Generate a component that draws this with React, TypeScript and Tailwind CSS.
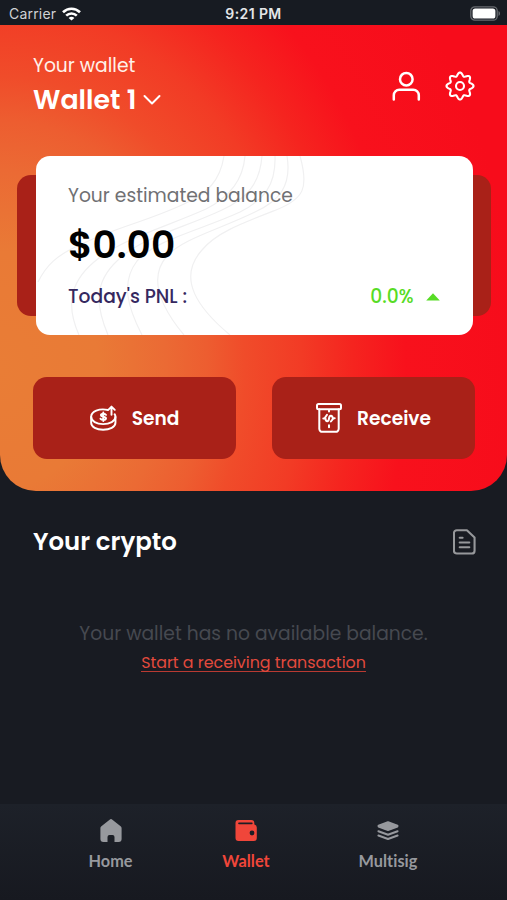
import React from "react";

const sans = "font-['Poppins','Inter',sans-serif]";

function gearPath() {
  const pts: string[] = [];
  for (let i = 0; i < 160; i++) {
    const a = (i / 160) * Math.PI * 2;
    const r = 11.8 + 1.7 * Math.cos(8 * a);
    pts.push(`${(15 + r * Math.cos(a)).toFixed(2)} ${(15 + r * Math.sin(a)).toFixed(2)}`);
  }
  return `M${pts.join("L")}Z`;
}

function StatusBar() {
  return (
    <div className="grid h-[25px] grid-cols-3 items-center bg-[#171b22] px-[6px] pt-[2px] font-['Inter',sans-serif]">
      <div className="flex items-center gap-[6px] pl-[3px]">
        <span className="text-[14px] tracking-[0.2px] text-[#cfd2d5]">Carrier</span>
        <svg width="19" height="14" viewBox="0 0 19 14" fill="none" stroke="#fff" strokeWidth="2.6">
          <path d="M1 5.2C5.8 .5 13.2 .5 18 5.2" />
          <path d="M4.2 8.6c3-2.9 7.6-2.9 10.6 0" />
          <path d="M9.5 13.6 6.6 10.9c1.7-1.5 4.1-1.5 5.8 0Z" fill="#fff" stroke="none" />
        </svg>
      </div>
      <span className="text-center text-[14px] font-semibold tracking-[0.4px] text-[#e4e6e8]">9:21 PM</span>
      <svg className="justify-self-end" width="31" height="15" viewBox="0 0 31 15">
        <rect x=".8" y=".8" width="26.4" height="13.4" rx="4" fill="none" stroke="#686b70" strokeWidth="1.3" />
        <rect x="2.6" y="2.4" width="22.8" height="10.2" rx="2.6" fill="#fff" />
        <path d="M28.5 5v5c2-.8 2-4.2 0-5Z" fill="#686b70" />
      </svg>
    </div>
  );
}

function ContourLines() {
  return (
    <svg className="absolute inset-0" width="436" height="179" viewBox="0 0 436 179" fill="none" stroke="#f0f0f1" strokeWidth="1.2">
      <path d="M188 0C184 25 172 37 148 48C112 65 78 72 46 88C20 99 10 110 2 126" />
      <path d="M209 0C207 25 192 42 170 53C130 71 85 83 58 106C32 128 31 152 43 179" />
      <path d="M226 0C224 28 210 43 186 54C148 72 104 82 82 104C57 127 60 150 72 179" />
      <path d="M239 0C240 29 228 44 204 56C165 74 119 84 101 105C85 126 91 150 106 179" />
      <path d="M251 0C256 30 243 45 219 56C182 74 146 83 131 100C110 124 128 155 148 179" />
      <path d="M264 0C273 32 268 43 240 54C204 68 180 77 166 94C140 123 163 153 194 179" />
    </svg>
  );
}

function BalanceCard() {
  return (
    <div className="mt-[40px] mr-[16px] ml-[17px] grid h-[179px] grid-cols-1 grid-rows-1 items-center">
      <div className="col-start-1 row-start-1 h-[141px] rounded-[14px] bg-[#a92118]" />
      <section className="relative col-start-1 row-start-1 mr-[18.5px] ml-[19px] h-[179px] overflow-hidden rounded-[14px] bg-white">
        <ContourLines />
        <div className="relative flex h-full flex-col pr-[33px] pl-[32px] pt-[27px]">
          <p className="text-[18.7px] leading-[26px] whitespace-nowrap text-[#707073]">Your estimated balance</p>
          <p className="mt-[12px] text-[37.6px] leading-[48px] font-semibold text-black">$0.00</p>
          <div className="mt-[14px] flex h-[28px] items-center justify-between">
            <span className="text-[18.7px] font-medium text-[#35285f]">Today&apos;s PNL :</span>
            <span className="flex items-center gap-[12px] text-[18.7px] font-medium text-[#57dc25]">
              0.0%
              <svg width="14" height="8" viewBox="0 0 14 8" fill="#57dc25">
                <path d="M7 .3 13.8 7.5H.2Z" />
              </svg>
            </span>
          </div>
        </div>
      </section>
    </div>
  );
}

function SendIcon() {
  return (
    <svg width="27" height="27" viewBox="0 0 28 28" fill="none" stroke="#fff" strokeWidth="2" strokeLinecap="round" strokeLinejoin="round">
      <path d="M18.5 5.2C9.5 3 1.2 7 1.2 12.3c0 4.5 5.6 7.5 12.4 7.5S26.4 16.8 26.4 12.3c0-1-.3-2-.9-2.8" />
      <path d="M1.2 12.3v6.1c0 4.5 5.6 7.3 12.4 7.3s12.8-2.8 12.8-7.3v-6.1" />
      <path d="M16.6 10.2c-.7-1.3-5.3-1.6-5.3.3 0 2.1 5.3 1.2 5.3 3.5 0 2-4.9 1.7-5.7.2M13.8 7.7v9" />
      <path d="M22.3 10.2V2.2M19 5l3.3-3.3L25.7 5" />
    </svg>
  );
}

function ReceiveIcon() {
  return (
    <svg width="26" height="30" viewBox="0 0 26 30" fill="none" stroke="#fff" strokeWidth="2" strokeLinecap="round" strokeLinejoin="round">
      <rect x="1" y="1" width="24" height="5.2" rx="1.5" />
      <path d="M3.3 6.2v19.6a3 3 0 0 0 3 3h13.4a3 3 0 0 0 3-3V6.2" />
      <path d="M13 7v1.6M13 22.3v2" />
      <path d="M7.3 15.6h2.2c.2 3.4 3.1 3.4 3.5.1.3-4 3.4-4 3.8-.4h1.9M11 11.8 8.8 15M17.2 15.6 14.9 18.5" />
    </svg>
  );
}

function Action({ icon, label }: { icon: React.ReactNode; label: string }) {
  return (
    <button className="flex h-[82px] items-center justify-center gap-[15px] rounded-[14px] bg-[#a92118] text-[18.6px] font-semibold text-white">
      {icon}
      <span className="pt-px">{label}</span>
    </button>
  );
}

function NavItem({ icon, label, color }: { icon: React.ReactNode; label: string; color: string }) {
  return (
    <div className={`flex flex-col items-center gap-[6px] ${color}`}>
      {icon}
      <span className="text-[16.3px] leading-[24px] font-bold tracking-[0.05px]">{label}</span>
    </div>
  );
}

export default function App() {
  return (
    <main className={`flex h-[900px] w-[507px] flex-col overflow-hidden bg-[#181b22] ${sans}`}>
      <StatusBar />
      <header className="h-[466px] rounded-b-[36px] bg-[radial-gradient(ellipse_520px_624px_at_0px_345px,#e97d36_0%,#e97a36_19%,#eb6a34_32%,#ed5d30_40%,#f04c2a_47%,#f23b25_58%,#f5241f_68%,#f8111c_78%,#f70c1b_100%)]">
        <div className="flex h-[91px] justify-between pt-[27px] pr-[32px] pl-[33px] text-white">
          <div>
            <p className="pt-px text-[18.7px] leading-[26px] text-[#fff1e9]">Your wallet</p>
            <h1 className="mt-[4px] flex items-center gap-[6px] text-[26.8px] leading-[34px] font-semibold">
              Wallet 1
              <svg width="18" height="12" viewBox="0 0 18 12" fill="none" stroke="#fff" strokeWidth="2" strokeLinecap="round" strokeLinejoin="round">
                <path d="m1.5 2 7.5 7.5L16.5 2" />
              </svg>
            </h1>
          </div>
          <div className="flex gap-[24px] pt-[19px]">
            <svg width="30" height="30" viewBox="0 0 30 30" fill="none" stroke="#fff" strokeWidth="2.5" strokeLinecap="round">
              <circle cx="15.3" cy="8.2" r="6.3" />
              <path d="M2.8 28.5V24.3a5.5 5.5 0 0 1 5.5-5.500h14a5.500 5.500 0 0 1 5.500 5.500v4.200" />
            </svg>
            <svg width="30" height="30" viewBox="0 0 30 30" fill="none" stroke="#fff" strokeWidth="2.100">
              <path d={gearPath()} />
              <circle cx="15" cy="15" r="4" />
            </svg>
          </div>
        </div>
        <BalanceCard />
        <div className="mt-[42px] grid grid-cols-2 gap-[36px] pr-[32px] pl-[33px]">
          <Action icon={<SendIcon />} label="Send" />
          <Action icon={<ReceiveIcon />} label="Receive" />
        </div>
      </header>
      <section className="flex flex-1 flex-col">
        <div className="mt-[33px] flex h-[36px] items-center justify-between pr-[31.5px] pl-[33px]">
          <h2 className="text-[24.4px] font-semibold text-white">Your crypto</h2>
          <svg className="mb-px" width="23" height="26" viewBox="0 0 24 27" fill="none" stroke="#96989b" strokeWidth="2.2" strokeLinecap="round" strokeLinejoin="round">
            <path d="M4 1.2h10.5l8 7.5V22.5a3 3 0 0 1-3 3H4a3 3 0 0 1-3-3V4.2a3 3 0 0 1 3-3Z" />
            <path d="M7 9h3M7 14h10M7 19h10" />
          </svg>
        </div>
        <div className="mt-[60px] flex flex-col items-center">
          <p className="text-[18.7px] leading-[28px] whitespace-nowrap text-[#464950]">Your wallet has no available balance.</p>
          <a className="mt-[6px] border-b border-[#b93a32] text-[15.85px] leading-[17px] whitespace-nowrap text-[#e34a3d]">Start a receiving transaction</a>
        </div>
      </section>
      <nav className="flex h-[96px] bg-linear-to-b from-[#1d2129] to-[#171920] pt-[13px] pl-[42px] font-['Lato',sans-serif]">
        <div className="w-[137px]">
          <NavItem
            label="Home"
            color="text-[#97999e]"
            icon={
              <svg width="24" height="26" viewBox="0 0 24 26" fill="currentColor">
                <path d="M10.6 2.7a2.2 2.2 0 0 1 2.8 0l8.2 6.5c.8.6 1 1.1 1 2V22a3 3 0 0 1-3 3H15.500v-5a2 2 0 0 0-2-2h-3a2 2 0 0 0-2 2V25H4.400a3 3 0 0 1-3-3V11.200c0-.9.200-1.400 1-2Z" />
              </svg>
            }
          />
        </div>
        <div className="w-[134px]">
          <NavItem
            label="Wallet"
            color="text-[#f0463a]"
            icon={
              <svg width="24" height="26" viewBox="0 0 24 26">
                <path d="M4.5 3h12.8a3 3 0 0 1 3 3v1.6a3 3 0 0 1 2.5 3V21a3 3 0 0 1-3 3H4.5a3 3 0 0 1-3-3V6a3 3 0 0 1 3-3Z" fill="currentColor" />
                <path d="M5 6.3h12.8" stroke="#1b1e25" strokeWidth="1.7" strokeLinecap="round" />
                <circle cx="18" cy="16" r="2.4" fill="#1b1e25" />
              </svg>
            }
          />
        </div>
        <div className="w-[150px]">
          <NavItem
            label="Multisig"
            color="text-[#97999e]"
            icon={
              <svg width="24" height="26" viewBox="0 0 24 26" fill="none" stroke="currentColor" strokeWidth="2" strokeLinecap="round" strokeLinejoin="round">
                <path d="M12 5.2 21.4 8.6v1L12 13 2.6 9.6v-1Z" fill="currentColor" />
                <path d="m2.4 14.2 9.6 3.5 9.6-3.5M2.4 18.5l9.6 3.5 9.6-3.5" />
              </svg>
            }
          />
        </div>
      </nav>
    </main>
  );
}
